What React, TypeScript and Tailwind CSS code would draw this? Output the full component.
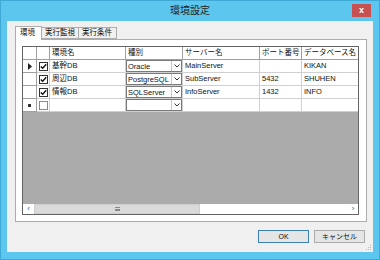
import React from "react";

type Row = {
    mark: "current" | "new" | "";
    checked: boolean;
    name: string;
    type: string;
    server: string;
    port: string;
    db: string;
};

const rows: Row[] = [
    { mark: "current", checked: true, name: "基幹DB", type: "Oracle", server: "MainServer", port: "", db: "KIKAN" },
    { mark: "", checked: true, name: "周辺DB", type: "PostgreSQL", server: "SubServer", port: "5432", db: "SHUHEN" },
    { mark: "", checked: true, name: "情報DB", type: "SQLServer", server: "InfoServer", port: "1432", db: "INFO" },
    { mark: "new", checked: false, name: "", type: "", server: "", port: "", db: "" },
];

const cols = "grid grid-cols-[14px_13px_76px_57px_77px_42px_80px] w-max";

function CheckBox({ checked }: { checked: boolean }) {
    return (
        <div
            className={`w-[9px] h-[9px] bg-white border ${checked ? "border-[#333]" : "border-[#8a8a8a]"} flex items-center justify-center`}
        >
            {checked && (
                <svg width="7" height="7" viewBox="0 0 7 7">
                    <path d="M0.8 3.4 L2.7 5.3 L6.2 1.2" stroke="#111" strokeWidth="1.4" fill="none" />
                </svg>
            )}
        </div>
    );
}

function Combo({ value }: { value: string }) {
    return (
        <div className="flex h-full border border-[#7a7a7a] bg-white">
            <div className="flex-1 pl-[1px] leading-[11px] whitespace-nowrap overflow-hidden">{value}</div>
            <div className="w-[10px] border-l border-[#c8c8c8] flex items-center justify-center">
                <svg width="6" height="4" viewBox="0 0 6 4">
                    <path d="M0.5 0.5 L3 3 L5.5 0.5" stroke="#333" strokeWidth="1" fill="none" />
                </svg>
            </div>
        </div>
    );
}

function DataGrid() {
    const head = "h-[13px] border-r border-b border-[#a0a0a0] bg-white pl-[2px] leading-[12px] whitespace-nowrap overflow-hidden";
    const cell = "h-[13px] border-r border-b border-[#d0d0d0] bg-white pl-[2px] leading-[12px] whitespace-nowrap overflow-hidden";
    return (
        <div className="flex-1 flex flex-col border border-[#646464] overflow-hidden bg-[#ababab] text-[7.5px]">
            <div className={cols}>
                <div className={head} />
                <div className={head} />
                <div className={head}>環境名</div>
                <div className={head}>種別</div>
                <div className={head}>サーバー名</div>
                <div className={head}>ポート番号</div>
                <div className={head}>データベース名</div>
            </div>
            {rows.map((r, i) => (
                <div key={i} className={cols}>
                    <div className="h-[13px] border-r border-b border-[#a0a0a0] bg-white flex items-center justify-center">
                        {r.mark === "current" && (
                            <svg width="4" height="7" viewBox="0 0 4 7">
                                <path d="M0 0 L4 3.5 L0 7 Z" fill="#222" />
                            </svg>
                        )}
                        {r.mark === "new" && <div className="w-[3px] h-[3px] bg-[#333]" />}
                    </div>
                    <div className="h-[13px] border-r border-b border-[#d0d0d0] bg-white flex items-center justify-center">
                        <CheckBox checked={r.checked} />
                    </div>
                    <div className={cell}>{r.name}</div>
                    <div className="h-[13px] border-r border-b border-[#d0d0d0] bg-white">
                        <Combo value={r.type} />
                    </div>
                    <div className={cell}>{r.server}</div>
                    <div className={cell}>{r.port}</div>
                    <div className={cell}>{r.db}</div>
                </div>
            ))}
            <div className="flex-1" />
            <div className="h-[10px] flex bg-white">
                <div className="w-[11px] flex items-center justify-center text-[8px] leading-none text-[#555]">‹</div>
                <div className="w-[166px] bg-[#dadada] border border-[#cfcfcf] flex items-center justify-center">
                    <div className="w-[5px] h-[4px] border-y border-[#888] flex items-center">
                        <div className="w-full h-px bg-[#888]" />
                    </div>
                </div>
                <div className="flex-1" />
                <div className="w-[10px] flex items-center justify-center text-[8px] leading-none text-[#555]">›</div>
            </div>
        </div>
    );
}

export default function App() {
    return (
        <div
            className="w-[380px] h-[260px] bg-[#5cc6ee] border border-[#3fa9d6] flex flex-col text-[7.5px] text-[#111]"
            style={{ fontFamily: '"Liberation Sans", "Noto Sans CJK JP", sans-serif' }}
        >
            {/* title bar */}
            <div className="h-[20px] grid grid-cols-[1fr_auto_1fr] items-start">
                <div />
                <div className="pt-[4px] text-[10px] leading-[12px] text-[#222]">環境設定</div>
                <div className="flex justify-end pr-[8px] pt-[3px]">
                    <div className="w-[19px] h-[13px] bg-[#c75050] flex items-center justify-center text-white text-[9px] font-bold leading-none">
                        x
                    </div>
                </div>
            </div>

            {/* client area */}
            <div className="flex-1 px-[6px] pb-[7px]">
                <div className="relative h-full bg-[#f0f0f0] pl-[8px] pr-[6px] pt-[5px] pb-[9px] flex flex-col">
                    {/* tabs */}
                    <div className="h-[13px] flex items-end relative z-10">
                        <div className="w-[27px] h-[14px] mb-[-1px] bg-white border border-b-0 border-[#acacac] pl-[4px] leading-[12px]">
                            環境
                        </div>
                        <div className="w-[37px] h-[12px] bg-[#f0f0f0] border border-l-0 border-[#acacac] pl-[3px] leading-[10px]">
                            実行監視
                        </div>
                        <div className="w-[38px] h-[12px] bg-[#f0f0f0] border border-l-0 border-[#acacac] pl-[3px] leading-[10px]">
                            実行条件
                        </div>
                    </div>
                    {/* tab page */}
                    <div className="h-[183px] bg-white border border-[#acacac] pl-[6px] pr-[7px] pt-[6px] pb-[6px] flex">
                        <DataGrid />
                    </div>
                    {/* buttons */}
                    <div className="mt-[8px] h-[13px] flex justify-end gap-[5px] pr-[2px]">
                        <button className="w-[51px] h-[13px] bg-[#e5e5e5] border border-[#3c7fb1] text-[7px] leading-[11px]">
                            OK
                        </button>
                        <button className="w-[51px] h-[13px] bg-[#e5e5e5] border border-[#acacac] text-[7px] leading-[11px]">
                            キャンセル
                        </button>
                    </div>
                    <svg className="absolute right-[1px] bottom-[1px]" width="6" height="6" viewBox="0 0 6 6">
                        <rect x="4" y="0" width="1" height="1" fill="#b8b8b8" />
                        <rect x="2" y="2" width="1" height="1" fill="#b8b8b8" />
                        <rect x="4" y="2" width="1" height="1" fill="#b8b8b8" />
                        <rect x="0" y="4" width="1" height="1" fill="#b8b8b8" />
                        <rect x="2" y="4" width="1" height="1" fill="#b8b8b8" />
                        <rect x="4" y="4" width="1" height="1" fill="#b8b8b8" />
                    </svg>
                </div>
            </div>
        </div>
    );
}
